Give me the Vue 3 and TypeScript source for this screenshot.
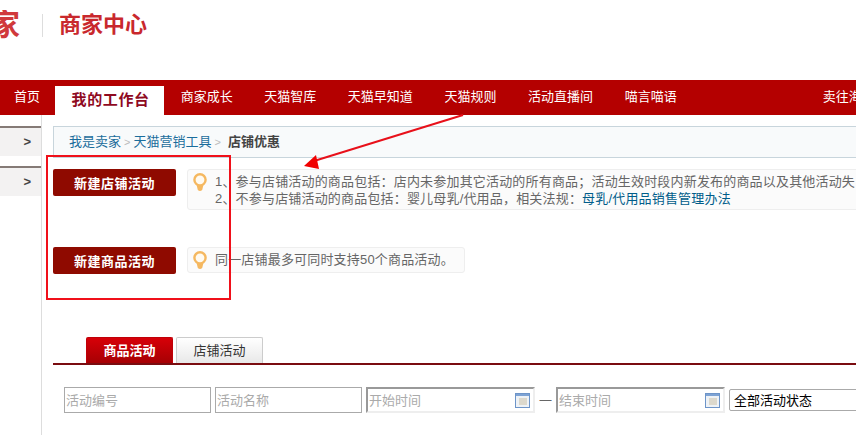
<script setup lang="ts">
const navItems = ['商家成长', '天猫智库', '天猫早知道', '天猫规则', '活动直播间', '喵言喵语']
const hints = [
  '1、参与店铺活动的商品包括：店内未参加其它活动的所有商品；活动生效时段内新发布的商品以及其他活动失',
  '2、不参与店铺活动的商品包括：婴儿母乳/代用品，相关法规：',
]
</script>

<template>
  <div class="page">
    <header class="top">
      <span class="logo-cut">家</span>
      <i class="logo-line"></i>
      <span class="logo-title">商家中心</span>
    </header>

    <nav class="nav">
      <a class="nav-item">首页</a>
      <a class="nav-item active">我的工作台</a>
      <a v-for="item in navItems" :key="item" class="nav-item">{{ item }}</a>
      <a class="nav-item sell">卖往海外</a>
    </nav>

    <div class="body">
      <aside class="side">
        <div class="side-item">&gt;</div>
        <div class="side-item">&gt;</div>
      </aside>

      <main class="main">
        <div class="crumb">
          <a>我是卖家</a><span class="sep">&gt;</span><a>天猫营销工具</a><span class="sep">&gt;</span><b>店铺优惠</b>
        </div>

        <section class="row first">
          <button class="create">新建店铺活动</button>
          <div class="hint wide">
            <svg class="bulb" width="14" height="20" viewBox="0 0 14 20">
              <circle cx="7" cy="6.8" r="5.6" fill="#fffaf0" stroke="#f5b860" stroke-width="2.4" />
              <path d="M3.6 12h6.8L9.2 17q-2.2 2-4.4 0z" fill="#f5b860" />
            </svg>
            <div class="hint-text">
              <p>{{ hints[0] }}</p>
              <p>{{ hints[1] }}<a class="law">母乳/代用品销售管理办法</a></p>
            </div>
          </div>
        </section>

        <section class="row second">
          <button class="create">新建商品活动</button>
          <div class="hint">
            <svg class="bulb" width="14" height="20" viewBox="0 0 14 20">
              <circle cx="7" cy="6.8" r="5.6" fill="#fffaf0" stroke="#f5b860" stroke-width="2.4" />
              <path d="M3.6 12h6.8L9.2 17q-2.2 2-4.4 0z" fill="#f5b860" />
            </svg>
            <div class="hint-text">
              <p>同一店铺最多可同时支持50个商品活动。</p>
            </div>
          </div>
        </section>

        <div class="tabs">
          <a class="tab on">商品活动</a>
          <a class="tab">店铺活动</a>
        </div>

        <form class="filters">
          <input class="field" placeholder="活动编号" />
          <input class="field" placeholder="活动名称" />
          <label class="date">
            <input placeholder="开始时间" />
            <svg width="15" height="15" viewBox="0 0 15 15">
              <rect x="0.5" y="0.5" width="14" height="14" fill="#eef2f6" stroke="#6d94c8" />
              <rect x="1" y="1" width="13" height="2" fill="#7ea3d4" />
              <rect x="4" y="5" width="8" height="7" fill="#dcd8cc" />
            </svg>
          </label>
          <span class="dash">—</span>
          <label class="date">
            <input placeholder="结束时间" />
            <svg width="15" height="15" viewBox="0 0 15 15">
              <rect x="0.5" y="0.5" width="14" height="14" fill="#eef2f6" stroke="#6d94c8" />
              <rect x="1" y="1" width="13" height="2" fill="#7ea3d4" />
              <rect x="4" y="5" width="8" height="7" fill="#dcd8cc" />
            </svg>
          </label>
          <select class="status">
            <option>全部活动状态</option>
          </select>
        </form>
      </main>
    </div>

    <!-- annotations drawn on the screenshot -->
    <div class="mark-box"></div>
    <svg class="mark-arrow" width="170" height="60" viewBox="0 0 170 60">
      <line x1="163" y1="1" x2="14" y2="47" stroke="#e8101a" stroke-width="2" />
      <polygon points="4,52 16,41 19,55" fill="#f00000" />
    </svg>
  </div>
</template>

<style scoped>
.page {
  position: relative;
  width: 856px;
  height: 435px;
  overflow: hidden;
  background: #fff;
  font-family: "Liberation Sans", "Noto Sans CJK SC", sans-serif;
  font-size: 13px;
  color: #666;
}

.top {
  display: flex;
  align-items: center;
  height: 80px;
  padding-bottom: 30px;
  box-sizing: border-box;
  overflow: hidden;
}

.logo-cut {
  width: 20px;
  font-size: 30px;
  line-height: 30px;
  font-weight: 700;
  color: #d0393c;
  text-indent: -10px;
  white-space: nowrap;
  overflow: hidden;
}

.logo-line {
  width: 1px;
  height: 23px;
  margin-left: 22px;
  background: #ddd;
}

.logo-title {
  margin: 0 0 6px 16px;
  font-size: 22px;
  font-weight: 700;
  color: #c9282d;
}

.nav {
  display: flex;
  height: 35px;
  padding-left: 14px;
  background: #b40000;
  white-space: nowrap;
}

.nav-item {
  margin-right: 31.6px;
  line-height: 34px;
  color: #fff;
}

.nav-item.active {
  margin: 6px 17px 0 -17px;
  padding: 0 14px 0 17px;
  background: #fff;
  color: #8f0a1f;
  font-size: 15px;
  font-weight: 700;
  letter-spacing: 0.6px;
  line-height: 27px;
}

.nav-item.sell {
  margin-left: 114.4px;
}

.body {
  display: flex;
  height: 320px;
}

.side {
  flex: none;
  width: 41px;
  padding-top: 11px;
  border-right: 1px solid #ddd;
}

.side-item {
  box-sizing: border-box;
  height: 30px;
  margin-bottom: 10px;
  padding-right: 10px;
  border-top: 2px solid #857a76;
  background: #f3f2f2;
  color: #444;
  font-family: "Liberation Sans", sans-serif;
  font-size: 13px;
  font-weight: 700;
  line-height: 27px;
  text-align: right;
}

.main {
  flex: none;
  width: 900px;
  padding: 11px 0 0 11px;
  box-sizing: border-box;
}

.crumb {
  box-sizing: border-box;
  height: 32px;
  padding-left: 15px;
  border: 1px solid #c8d5dc;
  border-right: 0;
  background: #f8fafb;
  line-height: 30px;
}

.crumb a {
  color: #1b6d9c;
}

.crumb b {
  margin-left: 4px;
  color: #444;
}

.sep {
  margin: 0 3px;
  color: #bbb;
  font-size: 11px;
}

.row {
  display: flex;
  align-items: flex-start;
  gap: 11px;
}

.row.first {
  margin-top: 11px;
}

.row.second {
  margin-top: 37px;
}

.create {
  flex: none;
  width: 123px;
  height: 27px;
  padding: 0;
  border: 0;
  border-radius: 2px;
  background: #8f0a00;
  color: #fff;
  font: 700 13px "Liberation Sans", "Noto Sans CJK SC", sans-serif;
  letter-spacing: 0.5px;
}

.hint {
  display: flex;
  gap: 8px;
  box-sizing: border-box;
  height: 26px;
  padding: 3px 10px 0 5px;
  border: 1px solid #eee;
  border-radius: 3px;
  background: #fbfbfb;
  white-space: nowrap;
}

.hint.wide {
  flex: none;
  width: 760px;
  height: 41px;
  padding-top: 3px;
}

.bulb {
  flex: none;
}

.hint-text p {
  margin: 0;
  line-height: 17px;
  letter-spacing: 0.18px;
}

.law {
  color: #005d8a;
}

.tabs {
  display: flex;
  gap: 3px;
  height: 26px;
  margin-top: 63px;
  padding-left: 33px;
  border-bottom: 2px solid #7a0c10;
}

.tab {
  box-sizing: border-box;
  width: 87px;
  height: 26px;
  border: 1px solid #ccc;
  border-bottom: 0;
  border-radius: 2px 2px 0 0;
  background: linear-gradient(#fff, #e8e8e8);
  color: #333;
  line-height: 25px;
  text-align: center;
}

.tab.on {
  border-color: #c00008;
  background: linear-gradient(#d70008, #a60004);
  color: #fff;
  font-weight: 700;
}

.filters {
  display: flex;
  align-items: center;
  gap: 4px;
  margin-top: 22px;
  padding-left: 11px;
}

.field {
  box-sizing: border-box;
  width: 147px;
  height: 26px;
  padding: 0 1px;
  border: 1px solid #aaa;
  outline: 0;
  font: 13px "Liberation Sans", "Noto Sans CJK SC", sans-serif;
}

.date {
  display: flex;
  align-items: center;
  box-sizing: border-box;
  width: 169px;
  height: 26px;
  padding-right: 3px;
  border: 2px solid;
  border-color: #999 #eee #eee #999;
}

.date input {
  flex: 1;
  min-width: 0;
  padding: 0 1px;
  border: 0;
  outline: 0;
  background: transparent;
  font: 13px "Liberation Sans", "Noto Sans CJK SC", sans-serif;
}

input::placeholder {
  color: #aaa;
}

.dash {
  width: 13px;
  color: #666;
  text-align: center;
  font-size: 12px;
}

.status {
  box-sizing: border-box;
  width: 200px;
  height: 22px;
  border: 1px solid #aaa;
  border-radius: 2px;
  background: #fff;
  color: #000;
  font: 13px "Liberation Sans", "Noto Sans CJK SC", sans-serif;
}

.mark-box {
  position: absolute;
  left: 46px;
  top: 155px;
  width: 185px;
  height: 145px;
  box-sizing: border-box;
  border: 2px solid #f0101a;
}

.mark-arrow {
  position: absolute;
  left: 300px;
  top: 114px;
}
</style>

<style>
html,
body {
  margin: 0;
  overflow: hidden;
}
</style>
